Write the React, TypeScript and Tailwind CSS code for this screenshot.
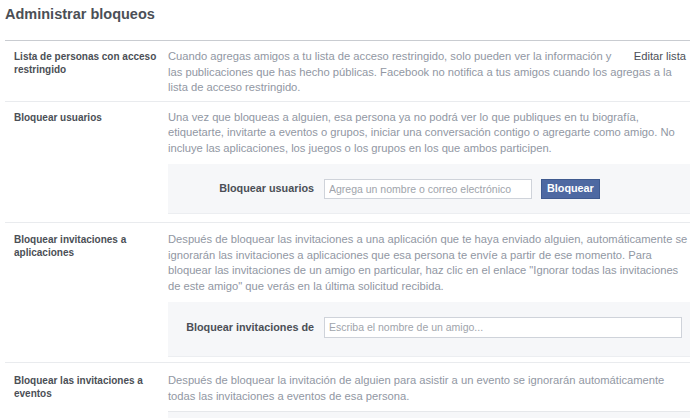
import React from 'react';

const font = { fontFamily: '"Liberation Sans", Arial, sans-serif' };

// description text, broken where the original breaks it
var Lines = (props: { lines: string[] }) => {
    return (
        <>
            {props.lines.map((l, i) => (
                <div key={i} className="whitespace-nowrap">{l}</div>
            ))}
        </>
    );
};

var Row = (props: any) => {
    return (
        <div className={`flex border-t border-[#e9ebee] pl-[9px] ${props.pad}`}>
            <div className="w-[154px] shrink-0 pr-[8px] pt-[1px] text-[10px] leading-[13px] font-bold text-[#4b4f56]">
                {props.label}
            </div>
            <div className="min-w-0 flex-1">
                <div className="text-[11.2px] leading-[15.5px] text-[#9197a3]">
                    {props.children}
                </div>
                {props.box}
            </div>
        </div>
    );
};

export default function App() {
    return (
        <div className="w-[700px] h-[418px] overflow-hidden bg-white" style={font}>
            <div className="pl-[5px] pr-[10px]">
                <h1 className="pt-[5px] text-[14.5px] leading-[18px] font-bold text-[#4b4f56]">Administrar bloqueos</h1>

                <div className="mt-[17px] border-t border-[#c9ccd1]">
                    <div className="flex pl-[9px] pt-[8px] pb-[5px]">
                        <div className="w-[154px] shrink-0 pr-[8px] pt-[1px] text-[10px] leading-[13px] font-bold text-[#4b4f56]">
                            Lista de personas con acceso restringido
                        </div>
                        <div className="min-w-0 flex-1 text-[11.2px] leading-[15.5px] text-[#9197a3]">
                            <span className="float-right whitespace-nowrap pr-[4px] text-[#4b4f56]">Editar lista</span>
                            <Lines lines={[
                                'Cuando agregas amigos a tu lista de acceso restringido, solo pueden ver la información y',
                                'las publicaciones que has hecho públicas. Facebook no notifica a tus amigos cuando los agregas a la',
                                'lista de acceso restringido.',
                            ]} />
                        </div>
                    </div>

                    <Row
                        pad="pt-[8px] pb-[8px]"
                        label="Bloquear usuarios"
                        box={
                            <div className="mt-[8px] flex h-[50px] items-center bg-[#f6f7f9] border-b border-[#eceef1] pl-[12px]">
                                <div className="w-[134px] text-right text-[10.8px] font-bold text-[#4b4f56]">Bloquear usuarios</div>
                                <input
                                    className="ml-[10px] h-[20px] w-[208px] border border-[#cfd3da] bg-white px-[4px] text-[10.5px] text-[#4b4f56] placeholder-[#a0a4ab] outline-none"
                                    placeholder="Agrega un nombre o correo electrónico"
                                    style={font}
                                />
                                <button className="ml-[9px] h-[20px] px-[5px] border border-[#3f5a8f] bg-[#4e69a2] text-[10.8px] font-bold text-white" style={font}>
                                    Bloquear
                                </button>
                            </div>
                        }
                    >
                        <Lines lines={[
                            'Una vez que bloqueas a alguien, esa persona ya no podrá ver lo que publiques en tu biografía,',
                            'etiquetarte, invitarte a eventos o grupos, iniciar una conversación contigo o agregarte como amigo. No',
                            'incluye las aplicaciones, los juegos o los grupos en los que ambos participen.',
                        ]} />
                    </Row>

                    <Row
                        pad="pt-[9px] pb-[5px]"
                        label="Bloquear invitaciones a aplicaciones"
                        box={
                            <div className="mt-[8px] flex h-[55px] items-center bg-[#f6f7f9] border-b border-[#eceef1] pl-[12px] pr-[8px] pb-[4px]">
                                <div className="w-[134px] text-right text-[10.8px] font-bold text-[#4b4f56]">Bloquear invitaciones de</div>
                                <input
                                    className="ml-[10px] h-[21px] flex-1 border border-[#cfd3da] bg-white px-[4px] text-[10.5px] text-[#4b4f56] placeholder-[#a0a4ab] outline-none"
                                    placeholder="Escriba el nombre de un amigo..."
                                    style={font}
                                />
                            </div>
                        }
                    >
                        <Lines lines={[
                            'Después de bloquear las invitaciones a una aplicación que te haya enviado alguien, automáticamente se',
                            'ignorarán las invitaciones a aplicaciones que esa persona te envíe a partir de ese momento. Para',
                            'bloquear las invitaciones de un amigo en particular, haz clic en el enlace "Ignorar todas las invitaciones',
                            'de este amigo" que verás en la última solicitud recibida.',
                        ]} />
                    </Row>

                    <Row
                        pad="pt-[10px] pb-[6px]"
                        label="Bloquear las invitaciones a eventos"
                        box={
                            <div className="mt-[7px] h-[55px] bg-[#f6f7f9] border-t border-[#e6e8eb]"></div>
                        }
                    >
                        <Lines lines={[
                            'Después de bloquear la invitación de alguien para asistir a un evento se ignorarán automáticamente',
                            'todas las invitaciones a eventos de esa persona.',
                        ]} />
                    </Row>
                </div>
            </div>
        </div>
    );
}
